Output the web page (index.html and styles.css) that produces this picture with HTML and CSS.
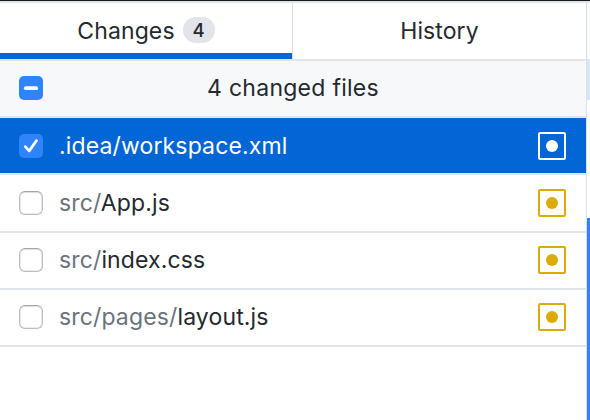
FILE: index.html
```html
<!DOCTYPE html>
<html lang="en">
<head>
<meta charset="utf-8">
<title>Changes</title>
<link rel="stylesheet" href="styles.css">
</head>
<body>
<div class="app">
  <main class="sidebar">
    <nav class="tabs">
      <div class="tab active"><span class="tab-label">Changes</span><span class="count">4</span></div>
      <div class="tab"><span class="tab-label">History</span></div>
    </nav>
    <div class="row header">
      <span class="check on"><svg viewBox="0 0 24 24"><path d="M6.8 12.2h10.4" stroke-width="3.8"/></svg></span>
      <span class="summary">4 changed files</span>
    </div>
    <div class="row selected">
      <span class="check on"><svg viewBox="0 0 24 24"><path d="M6.3 12.6l3.9 4.3L17.5 6.6" stroke-width="2.7"/></svg></span>
      <span class="path">.idea/workspace.xml</span>
      <svg class="status" viewBox="0 0 28 28"><rect x="1" y="1" width="26" height="26" rx="1"/><circle cx="14" cy="14" r="6"/></svg>
    </div>
    <div class="row tall">
      <span class="check"></span>
      <span class="path"><span class="dir">src/</span>App.js</span>
      <svg class="status" viewBox="0 0 28 28"><rect x="1" y="1" width="26" height="26" rx="1"/><circle cx="14" cy="14" r="6"/></svg>
    </div>
    <div class="row raised">
      <span class="check"></span>
      <span class="path"><span class="dir">src/</span>index.css</span>
      <svg class="status" viewBox="0 0 28 28"><rect x="1" y="1" width="26" height="26" rx="1"/><circle cx="14" cy="14" r="6"/></svg>
    </div>
    <div class="row raised">
      <span class="check"></span>
      <span class="path"><span class="dir">src/pages/</span>layout.js</span>
      <svg class="status" viewBox="0 0 28 28"><rect x="1" y="1" width="26" height="26" rx="1"/><circle cx="14" cy="14" r="6"/></svg>
    </div>
  </main>
  <aside class="diff">
    <div class="diff-head"></div>
    <div class="diff-hunk"></div>
    <div class="diff-context"></div>
    <div class="diff-selection"></div>
  </aside>
</div>
</body>
</html>
```
FILE: styles.css
```css
* { box-sizing: border-box; }
body {
  margin: 0;
  background: #fff;
  color: #24292e;
  font-family: Inter, sans-serif;
  font-size: 23px;
  line-height: 28px;
}
.app {
  display: flex;
  height: 420px;
  overflow: hidden;
  border-top: 1px solid #171a21;
}
.sidebar {
  width: 587px;
  flex: none;
  border-top: 2px solid #e1e4e8;
  border-right: 1px solid #dcdfe4;
}
.tabs {
  display: flex;
  height: 58px;
  border-bottom: 2px solid #e1e4e8;
}
.tab {
  flex: 1;
  display: flex;
  align-items: center;
  justify-content: center;
  letter-spacing: 0.1px;
}
.tab.active {
  flex: 0 0 293px;
  border-right: 1px solid #dcdfe4;
  box-shadow: inset 0 -6px #0366d6;
}
.tab-label, .summary, .path { white-space: nowrap; }
.count {
  width: 32px;
  height: 26px;
  margin: 0 0 2px 8px;
  border-radius: 13px;
  background: #e1e4e8;
  font-size: 18.5px;
  font-weight: 500;
  line-height: 27px;
  text-align: center;
}
.row {
  display: flex;
  align-items: center;
  height: 57px;
  padding: 0 20px 0 19px;
  border-bottom: 2px solid #e1e4e8;
}
.row.tall { height: 58px; }
.row.header, .row.raised { padding-bottom: 1px; }
.header { background: #f6f8fa; }
.selected { background: #0366d6; color: #fff; }
.summary {
  flex: 1;
  padding-right: 23px;
  letter-spacing: 0.27px;
  text-align: center;
}
.path { flex: 1; margin-left: 16px; letter-spacing: 0.14px; }
.dir { color: #6a737d; }
.check {
  flex: none;
  width: 24px;
  height: 24px;
  border: 1.5px solid #bdbdbf;
  border-top-color: #a5a5a7;
  border-radius: 6px;
  background: #fff;
  box-shadow: inset 0 1px 1px #e0e0e0, inset 0 0 0 1px #ececec;
}
.check.on {
  border: 0;
  border-radius: 5px;
  background: #2f83fb;
  box-shadow: none;
}
.check svg {
  display: block;
  fill: none;
  stroke: #fff;
  stroke-linecap: round;
  stroke-linejoin: round;
}
.status { flex: none; width: 28px; height: 28px; color: #dbab09; }
.selected .status { color: #fff; }
.status rect { fill: none; stroke: currentColor; stroke-width: 2; }
.status circle { fill: currentColor; }
.diff { flex: 1; }
.diff-head {
  height: 60px;
  background: #fafbfc;
  border-top: 2px solid #e1e4e8;
  border-bottom: 2px solid #e1e4e8;
}
.diff-hunk { height: 39px; background: #d3e5f7; }
.diff-context { height: 118px; }
.diff-selection { height: 202px; background: #2f83fb; }
```
